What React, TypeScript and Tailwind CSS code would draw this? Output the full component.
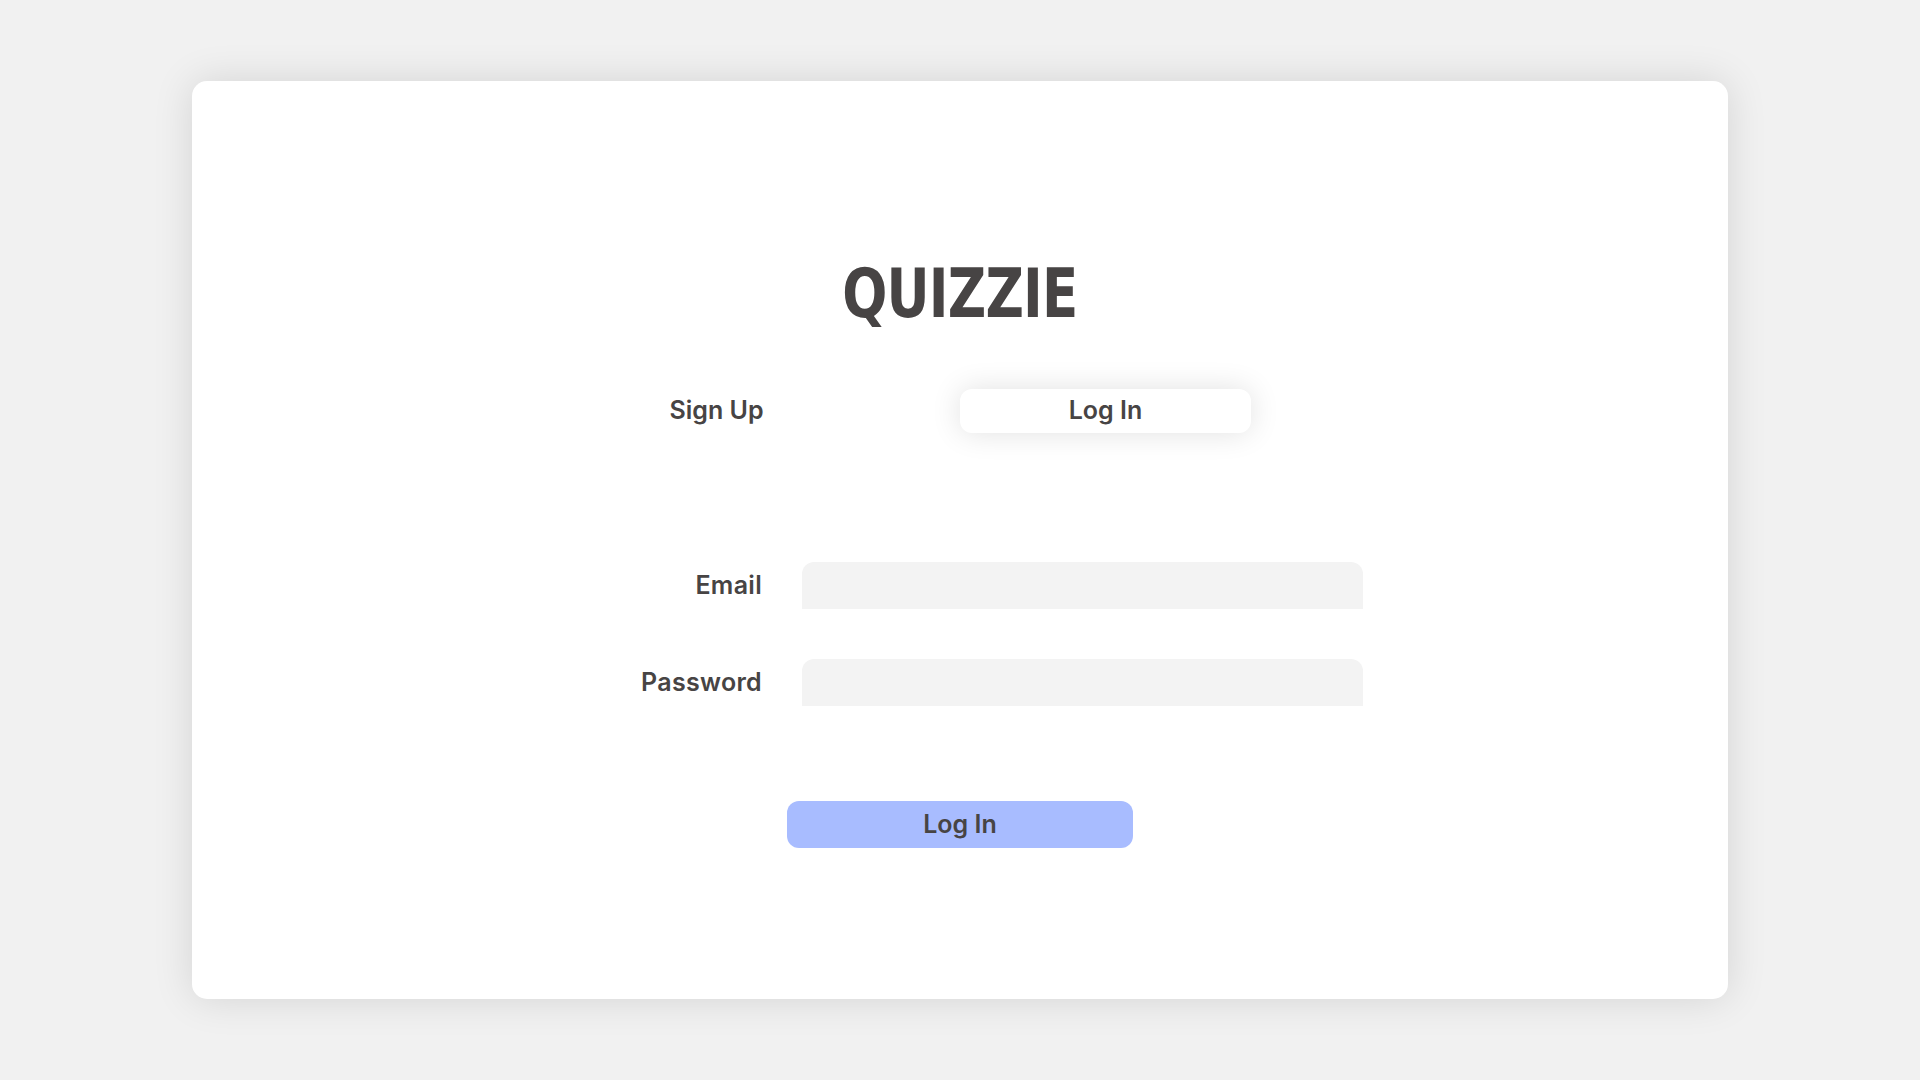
import React from "react";

export default function App() {
  const body = { fontFamily: "Inter, 'Open Sans', sans-serif" };
  return (
    <div className="w-[1920px] h-[1080px] bg-[#f1f1f1] pt-[81px]" style={body}>
      <div className="mx-auto w-[1536px] h-[918px] bg-white rounded-[15px] shadow-[0_0_40px_rgba(0,0,0,0.12)] flex flex-col">
        <div className="mt-[179px] flex justify-center">
          <div
            className="inline-block scale-x-[0.78] text-[68px] leading-none font-black text-[#474444] tracking-[-1px]"
            style={{ fontFamily: "'DejaVu Sans', sans-serif" }}
          >
            QUIZZIE
          </div>
        </div>

        <div className="mt-[61px] ml-[379px] flex items-center gap-[98px] h-[44px]">
          <button className="w-[291px] h-[44px] flex items-center justify-center text-[25px] font-semibold text-[#474444]">
            Sign Up
          </button>
          <button className="w-[291px] h-[44px] rounded-[12px] bg-white shadow-[0_0_30px_rgba(0,0,0,0.12)] flex items-center justify-center text-[25px] font-semibold text-[#474444]">
            Log In
          </button>
        </div>

        <div className="mt-[129px] flex flex-col gap-[50px] ml-[365px]">
          <div className="flex items-center gap-[40px]">
            <label className="w-[205px] text-right text-[25px] font-semibold text-[#474444] tracking-[0.3px]">Email</label>
            <input className="w-[561px] h-[47px] bg-[#f3f3f3] rounded-t-[12px] outline-none px-4 text-[20px]" />
          </div>
          <div className="flex items-center gap-[40px]">
            <label className="w-[205px] text-right text-[25px] font-semibold text-[#474444] tracking-[0.3px]">Password</label>
            <input type="password" className="w-[561px] h-[47px] bg-[#f3f3f3] rounded-t-[12px] outline-none px-4 text-[20px]" />
          </div>
        </div>

        <div className="mt-[95px] flex justify-center">
          <button className="w-[346px] h-[47px] rounded-[12px] bg-[#a8bcff] text-[25px] font-semibold text-[#474444] flex items-center justify-center">
            Log In
          </button>
        </div>
      </div>
    </div>
  );
}
